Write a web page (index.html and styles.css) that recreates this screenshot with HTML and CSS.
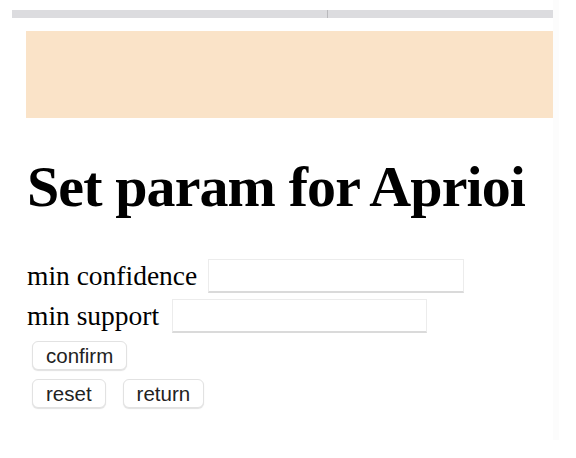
FILE: index.html
```html
<!DOCTYPE html>
<html>
<head>
<meta charset="utf-8">
<link rel="stylesheet" href="styles.css">
</head>
<body>
<div class="topbar"><span class="tick"></span></div>
<div class="page">
  <div class="banner"></div>
  <h1 class="title">Set param for Aprioi</h1>
  <div class="row row-first">
    <label class="label">min confidence</label>
    <input class="field field-conf" type="text">
  </div>
  <div class="row">
    <label class="label">min support</label>
    <input class="field field-sup" type="text">
  </div>
  <div class="btn-row btn-row-first">
    <button class="btn">confirm</button>
  </div>
  <div class="btn-row">
    <button class="btn">reset</button>
    <button class="btn">return</button>
  </div>
</div>
<div class="edge"></div>
</body>
</html>
```

FILE: styles.css
```css
html, body {
  margin: 0;
  padding: 0;
  background: #ffffff;
}
body {
  width: 576px;
  height: 458px;
  overflow: hidden;
  position: relative;
  font-family: "Liberation Serif", "Times New Roman", serif;
  color: #000;
}
.topbar {
  margin: 10px 23px 0 12px;
  height: 8px;
  background: #dcdcdf;
  position: relative;
}
.tick {
  position: absolute;
  left: 315px;
  top: 0;
  width: 1px;
  height: 8px;
  background: #b9b9bc;
}
.page {
  margin-left: 26px;
  width: 527px;
}
.banner {
  margin-top: 13px;
  height: 87px;
  background: #fae3c8;
}
.title {
  margin: 37px 0 0 1px;
  font-size: 58px;
  line-height: 64px;
  font-weight: bold;
  letter-spacing: -0.9px;
}
.row {
  display: flex;
  align-items: center;
  height: 40px;
}
.row-first {
  margin-top: 37px;
}
.label {
  font-size: 27.5px;
  line-height: 34px;
  margin-left: 1px;
}
.field {
  height: 34px;
  box-sizing: border-box;
  border: 1px solid #ececec;
  border-bottom: 2px solid #dadada;
  background: #fff;
  margin-left: 11px;
  padding: 0;
}
.field-conf { width: 256px; }
.field-sup { width: 255px; margin-left: 13px; }
.btn-row {
  display: flex;
  gap: 17px;
  padding-left: 6px;
  margin-top: 9px;
}
.btn-row-first {
  margin-top: 5px;
}
.btn {
  height: 29px;
  box-sizing: border-box;
  padding: 0 13px;
  font-family: "Liberation Sans", Arial, sans-serif;
  font-size: 20.5px;
  color: #222;
  background: #fff;
  border: 1px solid #e2e2e2;
  border-radius: 6px;
  box-shadow: 0 1px 1px rgba(0,0,0,0.12);
}
.edge {
  position: absolute;
  left: 553px;
  top: 0;
  width: 6px;
  height: 440px;
  background: #fcfcfc;
}
```
